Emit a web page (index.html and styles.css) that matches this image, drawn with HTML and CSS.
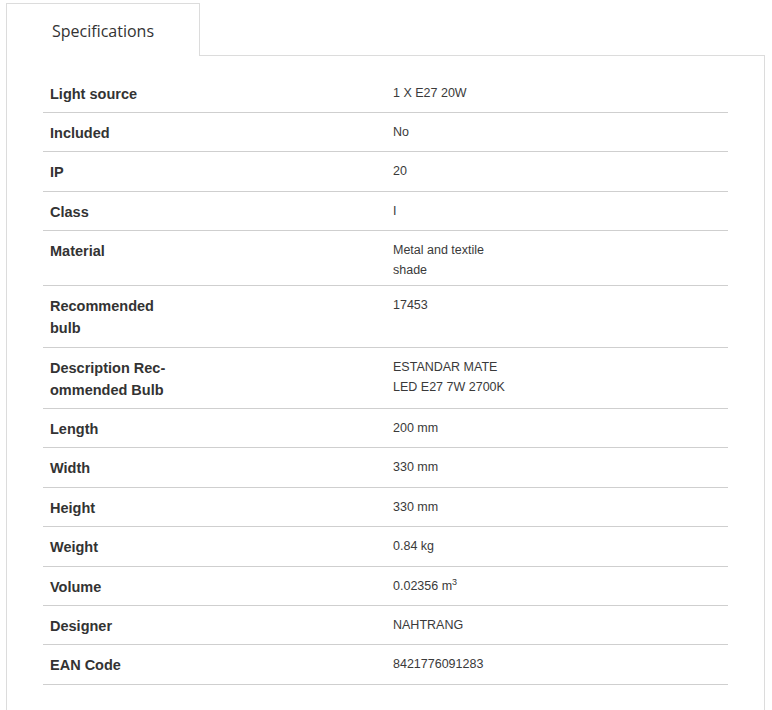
FILE: index.html
```html
<!DOCTYPE html>
<html>
<head>
<meta charset="utf-8">
<link rel="stylesheet" href="styles.css">
</head>
<body>
<div class="tabs">
  <div class="tabbar">
    <div class="tab">Specifications</div>
    <div class="filler"></div>
  </div>
  <div class="panel">
    <table class="specs">
      <tr><th>Light source</th><td>1 X E27 20W</td></tr>
      <tr><th>Included</th><td>No</td></tr>
      <tr><th>IP</th><td>20</td></tr>
      <tr><th>Class</th><td>I</td></tr>
      <tr><th>Material</th><td>Metal and textile<br>shade</td></tr>
      <tr><th>Recommended<br>bulb</th><td>17453</td></tr>
      <tr><th>Description Rec-<br>ommended Bulb</th><td>ESTANDAR MATE<br>LED E27 7W 2700K</td></tr>
      <tr><th>Length</th><td>200 mm</td></tr>
      <tr><th>Width</th><td>330 mm</td></tr>
      <tr><th>Height</th><td>330 mm</td></tr>
      <tr><th>Weight</th><td>0.84 kg</td></tr>
      <tr><th>Volume</th><td>0.02356 m<sup>3</sup></td></tr>
      <tr><th>Designer</th><td>NAHTRANG</td></tr>
      <tr><th>EAN Code</th><td>8421776091283</td></tr>
    </table>
  </div>
</div>
</body>
</html>
```
FILE: styles.css
```css
html, body {
  margin: 0;
  padding: 0;
  background: #fff;
}
.tabs {
  margin: 3px 0 0 6px;
  width: 759px;
}
.tabbar {
  display: flex;
}
.tab {
  box-sizing: border-box;
  width: 194px;
  height: 53px;
  border: 1px solid #dcdcdc;
  border-bottom: none;
  padding: 16px 0 0 45px;
  font-family: "Open Sans", sans-serif;
  font-size: 16px;
  line-height: 22px;
  color: #333;
}
.filler {
  flex: 1;
  height: 53px;
  box-sizing: border-box;
  border-bottom: 1px solid #dcdcdc;
}
.panel {
  border-left: 1px solid #dcdcdc;
  border-right: 1px solid #dcdcdc;
  padding: 17.6px 36px 40px 36px;
}
.specs {
  width: 100%;
  border-collapse: collapse;
}
.specs tr {
  border-bottom: 1px solid #cfcfcf;
}
.specs th {
  width: 343px;
  text-align: left;
  vertical-align: top;
  padding: 9px 0 7.4px 7px;
  font-family: "Liberation Sans", Arial, sans-serif;
  font-weight: bold;
  font-size: 14.5px;
  line-height: 22px;
  color: #333;
}
.specs td {
  vertical-align: top;
  padding: 9px 0 5px 0;
  font-family: "Liberation Sans", Arial, sans-serif;
  font-size: 12.5px;
  line-height: 20px;
  color: #3a3a3a;
}
.specs sup {
  font-size: 9px;
  line-height: 0;
  vertical-align: 5px;
}
```
